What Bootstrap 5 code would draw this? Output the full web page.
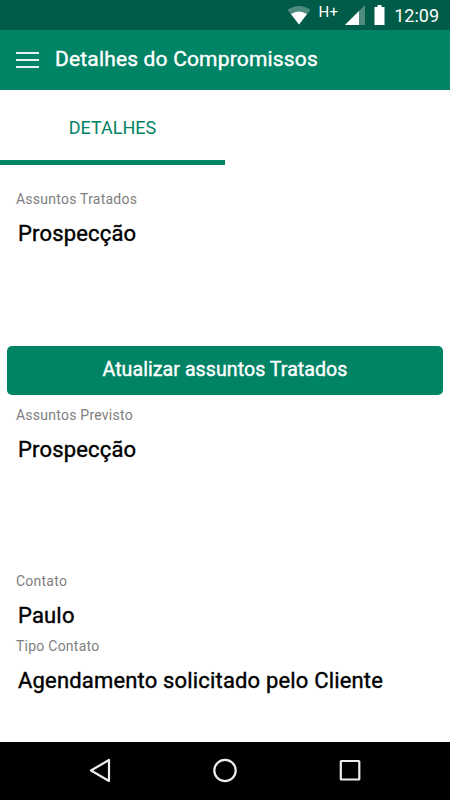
<!DOCTYPE html>
<html lang="pt-BR">
<head>
<meta charset="utf-8">
<meta name="viewport" content="width=device-width, initial-scale=1">
<title>Detalhes do Compromissos</title>
<link href="https://cdn.jsdelivr.net/npm/bootstrap@5.3.0/dist/css/bootstrap.min.css" rel="stylesheet">
<style>
  body { font-family: Roboto, "Liberation Sans", sans-serif; height: 800px; color: #000; overflow: hidden; }
  svg { display: block; flex: none; }
  .status-bar { height: 30px; background: #005b48; padding-right: 11px; }
  .network { font-size: 15px; line-height: 24px; height: 30px; margin: 0 7px 0 8px; letter-spacing: .2px; }
  .battery { margin-left: 9px; }
  .clock { font-size: 18px; line-height: 32px; margin-left: 8px; }
  .app-bar { height: 60px; background: #018365; padding: 0 15px; }
  .app-title, .field-value, .btn-update { font-weight: 400; -webkit-text-stroke: .4px currentColor; }
  .app-title { font-size: 21px; line-height: 59px; height: 60px; margin-left: 15px; letter-spacing: .17px; }
  .tab-link { width: 225px; height: 75px; line-height: 76px; font-size: 18px; color: #018365; border-bottom: 5px solid #018365; }
  .field-label { font-size: 14px; line-height: 20px; color: #808080; padding-left: 16px; letter-spacing: .24px; }
  .field-value { font-size: 22px; line-height: 30px; padding: 10px 0 0 18px; margin-bottom: 5px; letter-spacing: .17px; }
  .field-tall { height: 166px; }
  .field-first { height: 157px; }
  .btn-update { height: 49px; margin: 0 7px 10px; padding: 0 0 1px; background: #018365; font-size: 19.6px; line-height: 46px; border: 0; border-radius: 5px; letter-spacing: .05px; }
  .system-nav { height: 58px; padding: 0 89px; }
</style>
</head>
<body class="d-flex flex-column bg-white m-0">
<div class="status-bar d-flex justify-content-end text-white">
  <svg width="24" height="30" viewBox="0 0 24 30"><path d="M.5 10Q12 2 23.500 10L12 24.500Z" fill="#4f8c7f"/><path d="M4 14Q12 9 20 14L12 24.500Z" fill="#fff"/></svg>
  <span class="network">H+</span>
  <svg width="20" height="30" viewBox="0 0 20 30"><path d="M0 25 20 5V25Z" fill="#4f8c7f"/><path d="M0 25 14 11V25Z" fill="#fff"/></svg>
  <svg class="battery" width="12" height="30" viewBox="0 0 12 30"><path d="M3.500 5h4v2H10.500V25H.5V7h3Z" fill="#fff"/></svg>
  <span class="clock">12:09</span>
</div>
<header class="app-bar d-flex align-items-center text-white">
  <svg width="25" height="18" viewBox="0 0 25 18"><path d="M1 2H24M1 9H24M1 16H24" stroke="#fff" stroke-width="2" opacity=".9"/></svg>
  <h1 class="app-title mb-0">Detalhes do Compromissos</h1>
</header>
<nav class="nav mb-4"><a class="tab-link text-center text-decoration-none" href="#detalhes">DETALHES</a></nav>
<main id="detalhes" class="flex-grow-1">
  <section class="field-first"><div class="field-label">Assuntos Tratados</div><div class="field-value">Prospecção</div></section>
  <div class="d-grid"><button class="btn btn-update text-white" type="button">Atualizar assuntos Tratados</button></div>
  <section class="field-tall"><div class="field-label">Assuntos Previsto</div><div class="field-value">Prospecção</div></section>
  <section><div class="field-label">Contato</div><div class="field-value">Paulo</div></section>
  <section><div class="field-label">Tipo Contato</div><div class="field-value">Agendamento solicitado pelo Cliente</div></section>
</main>
<footer class="system-nav bg-black d-flex align-items-center justify-content-between">
  <svg width="22" height="26" viewBox="0 0 22 26"><path d="M2 12.500 20 2V23Z" fill="none" stroke="#eee" stroke-width="2.200" stroke-linejoin="round"/></svg>
  <svg width="26" height="26" viewBox="0 0 26 26"><circle cx="13" cy="12.500" r="10.700" fill="none" stroke="#eee" stroke-width="2.200"/></svg>
  <svg width="22" height="26" viewBox="0 0 22 26"><rect x="1.800" y="3" width="18.500" height="18.500" rx=".5" fill="none" stroke="#eee" stroke-width="2.200"/></svg>
</footer>
</body>
</html>
